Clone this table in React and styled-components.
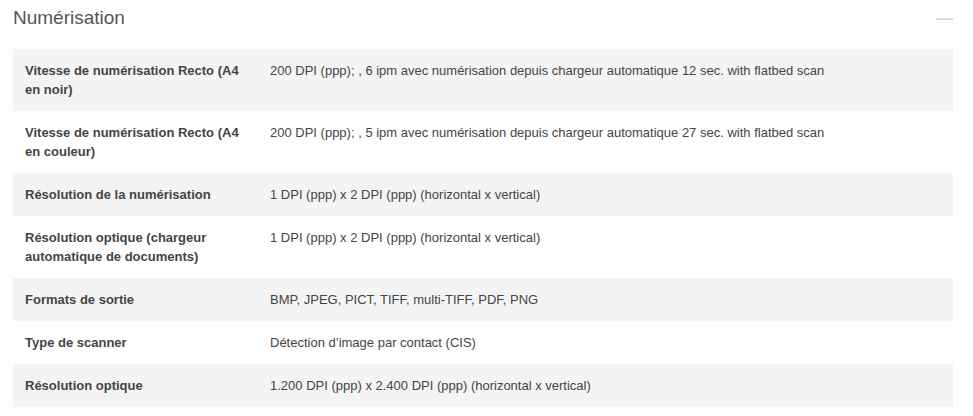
import React from "react";
import styled, { createGlobalStyle } from "styled-components";

const GlobalStyle = createGlobalStyle`
  body {
    margin: 0;
    background: #fff;
    font-family: "Liberation Sans", Arial, sans-serif;
  }
`;

const specs = [
  {
    label: "Vitesse de numérisation Recto (A4 en noir)",
    value:
      "200 DPI (ppp); , 6 ipm avec numérisation depuis chargeur automatique 12 sec. with flatbed scan",
  },
  {
    label: "Vitesse de numérisation Recto (A4 en couleur)",
    value:
      "200 DPI (ppp); , 5 ipm avec numérisation depuis chargeur automatique 27 sec. with flatbed scan",
  },
  {
    label: "Résolution de la numérisation",
    value: "1 DPI (ppp) x 2 DPI (ppp) (horizontal x vertical)",
  },
  {
    label: "Résolution optique (chargeur automatique de documents)",
    value: "1 DPI (ppp) x 2 DPI (ppp) (horizontal x vertical)",
  },
  {
    label: "Formats de sortie",
    value: "BMP, JPEG, PICT, TIFF, multi-TIFF, PDF, PNG",
  },
  { label: "Type de scanner", value: "Détection d’image par contact (CIS)" },
  {
    label: "Résolution optique",
    value: "1.200 DPI (ppp) x 2.400 DPI (ppp) (horizontal x vertical)",
  },
];

const App = () => {
  return (
    <>
      <GlobalStyle />
      <Section>
        <Header>
          <Title>Numérisation</Title>
          <Collapse aria-label="Réduire" />
        </Header>
        <SpecTable>
          <tbody>
            {specs.map((row, i) => (
              <Row key={row.label} $striped={i % 2 === 0}>
                <Label>{row.label}</Label>
                <Value>{row.value}</Value>
              </Row>
            ))}
          </tbody>
        </SpecTable>
      </Section>
    </>
  );
};

const Section = styled.section`
  width: 940px;
  padding: 6px 20px 0 13px;
`;

const Header = styled.div`
  display: flex;
  align-items: center;
  justify-content: space-between;
  height: 24px;
  margin-bottom: 19px;
`;

const Title = styled.h2`
  margin: 0;
  font-size: 19px;
  line-height: 24px;
  font-weight: normal;
  color: #555;
`;

const Collapse = styled.span`
  display: block;
  width: 17px;
  height: 2px;
  margin-top: 1px;
  background: #dcdcdc;
`;

const SpecTable = styled.table`
  width: 100%;
  border-collapse: collapse;
  font-size: 13px;
  line-height: 19px;
`;

const Row = styled.tr`
  background: ${(p) => (p.$striped ? "#f4f4f4" : "#fff")};
`;

const Label = styled.th`
  width: 225px;
  padding: 12px 20px 12px 12px;
  text-align: left;
  vertical-align: top;
  font-weight: bold;
  color: #444;
`;

const Value = styled.td`
  padding: 12px 12px 12px 0;
  vertical-align: top;
  color: #444;
`;

export default App;
